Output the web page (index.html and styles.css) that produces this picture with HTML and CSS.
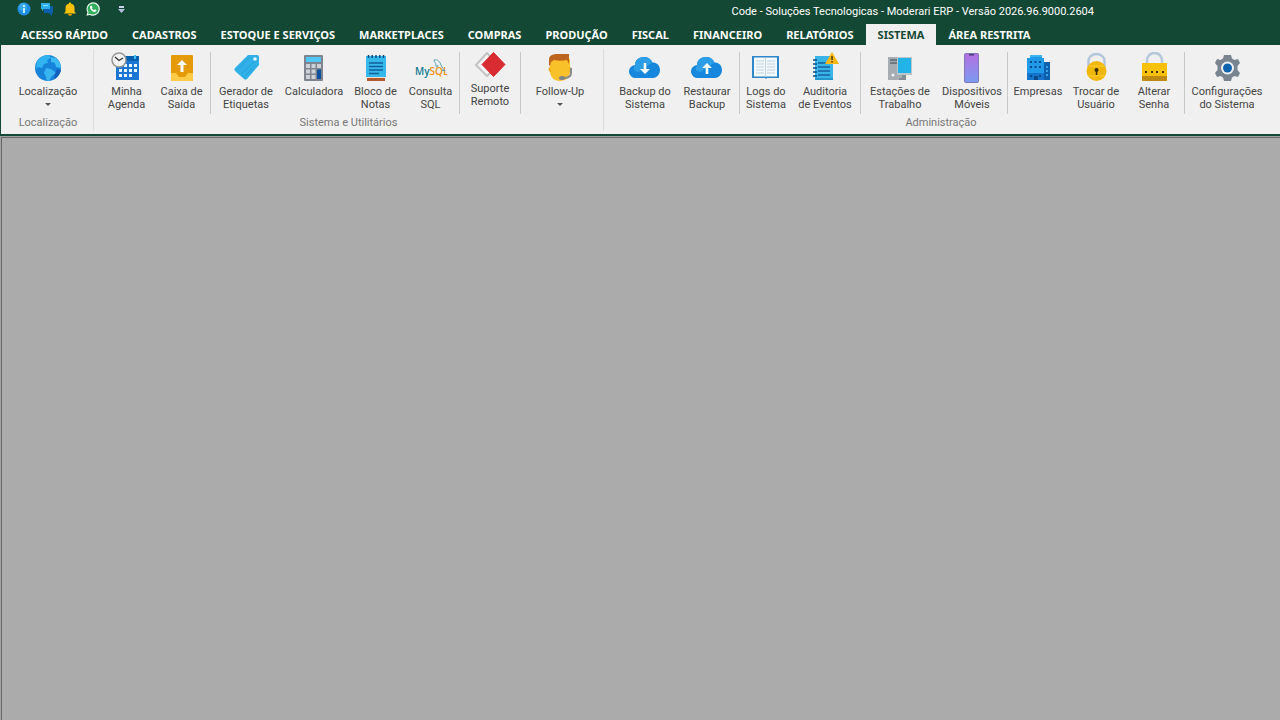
FILE: index.html
```html
<!DOCTYPE html>
<html lang="pt-BR">
<head>
  <meta charset="UTF-8" />
  <title>Moderari ERP</title>
  <link rel="stylesheet" href="styles.css">
</head>
<body>
  <header class="titlebar">
    <div class="quick-access">
      <button class="quick-btn" aria-label="Info">
        <svg width="14" height="14" viewBox="0 0 14 14"><circle cx="7" cy="7" r="6.5" fill="#1b8fe0"/><circle cx="6" cy="5" r="4" fill="#36a9ea"/><rect x="6" y="6" width="2" height="5" fill="#b9ecff"/><rect x="6" y="3" width="2" height="2" fill="#b9ecff"/></svg>
      </button>
      <button class="quick-btn" aria-label="Chat">
        <svg width="14" height="14" viewBox="0 0 14 14"><path d="M4 4h9v7h-1v3l-3-3H4z" fill="#0b5eae"/><path d="M1 1h9v6H4L2 9V7H1z" fill="#2fb0ee"/><path d="M3 3h5v1H3z" fill="#8bdcff"/></svg>
      </button>
      <button class="quick-btn" aria-label="Alertas">
        <svg width="14" height="14" viewBox="0 0 14 14"><path d="M7 0.500c.8 0 1.200.5 1.200 1.200C10.500 2.200 11.500 4 11.500 6v3.500l1.500 2H1l1.500-2V6c0-2 1-3.800 3.300-4.300C5.800 1 6.200.5 7 .5z" fill="#fcc00a"/><path d="M5 12h4c0 1-.8 1.800-2 1.800S5 13 5 12z" fill="#e39b00"/></svg>
      </button>
      <button class="quick-btn" aria-label="WhatsApp">
        <svg width="14" height="14" viewBox="0 0 14 14"><path d="M7 .3a6.700 6.700 0 1 1-3 12.600L.4 13.700l1-3.400A6.700 6.700 0 0 1 7 .3z" fill="#e6f2ea"/><path d="M7 1.500a5.500 5.500 0 1 1-2.800 10.200L2 12.200l.6-2.100A5.500 5.500 0 0 1 7 1.500z" fill="#2fae5b"/><path d="M4.700 3.800l1-.2.8 1.800-.6.8c.5 1 1.100 1.500 2 1.900l.8-.8 1.700.8c0 1.300-.9 1.900-1.900 1.800C6 9.600 4 7.300 4 5.200c0-.6.300-1.100.7-1.400z" fill="#fff"/></svg>
      </button>
      <button class="quick-btn quick-more" aria-label="Personalizar">
        <svg width="7" height="7" viewBox="0 0 7 7"><path d="M1 0h5v2H1z" fill="#c9d5e6"/><path d="M0 3h7L3.500 7z" fill="#b4c3dc"/></svg>
      </button>
    </div>
    <div class="window-title">Code - Soluções Tecnologicas - Moderari ERP - Versão 2026.96.9000.2604</div>
  </header>

  <nav class="tabs">
    <button class="tab">ACESSO RÁPIDO</button>
    <button class="tab">CADASTROS</button>
    <button class="tab">ESTOQUE E SERVIÇOS</button>
    <button class="tab">MARKETPLACES</button>
    <button class="tab">COMPRAS</button>
    <button class="tab">PRODUÇÃO</button>
    <button class="tab">FISCAL</button>
    <button class="tab">FINANCEIRO</button>
    <button class="tab">RELATÓRIOS</button>
    <button class="tab active">SISTEMA</button>
    <button class="tab">ÁREA RESTRITA</button>
  </nav>

  <div class="ribbon">
    <section class="group group-local">
      <div class="items">
        <button class="item w-xl">
          <svg class="icon" viewBox="0 0 32 32">
            <circle cx="16" cy="16" r="13" fill="#1683d8"/>
            <path d="M5 9C8 5 12 3 17 3l2 3-4 2 1 3-4 1-2 4-4-1-2 2z" fill="#31b3f1"/>
            <path d="M19 5l5 1c3 3 5 6 5 10l-5-1-1-4-4-1z" fill="#3cbaf3"/>
            <path d="M14 16l5 1 5 4-4 3-3 5c-2 0-3-1-3-4l-2-4z" fill="#38b5f0"/>
            <path d="M25 17l4 1c-1 4-3 7-7 9l1-5z" fill="#145fbe"/>
          </svg>
          <span>Localização</span>
          <i class="caret"></i>
        </button>
      </div>
      <div class="group-title">Localização</div>
    </section>

    <section class="group group-tools">
      <div class="items">
        <button class="item w-sm">
          <svg class="icon" viewBox="0 0 32 32">
            <path d="M5 4h23v24H5z" fill="#1976d2"/>
            <path d="M5 4h23v5H5z" fill="#0760ad"/>
            <path d="M23 3h2v4h-2z" fill="#38c1f3"/>
            <path d="M13 12h3v3h-3zM18 12h3v3h-3zM23 12h3v3h-3zM8 17h3v3H8zM13 17h3v3h-3zM18 17h3v3h-3zM23 17h3v3h-3zM8 22h3v3H8zM13 22h3v3h-3zM18 22h3v3h-3z" fill="#e9f7ff"/>
            <circle cx="8" cy="8" r="7" fill="#f3f3f3" stroke="#959595" stroke-width="1.500"/>
            <path d="M4 5l4 3.500L12 6" fill="none" stroke="#333" stroke-width="1.300"/>
          </svg>
          <span>Minha<br>Agenda</span>
        </button>
        <button class="item w-sm">
          <svg class="icon" viewBox="0 0 32 32">
            <rect x="5" y="3" width="22" height="26" rx="1" fill="#e59b09"/>
            <path d="M5 21h5l3 4h6l3-4h5v7a1 1 0 0 1-1 1H6a1 1 0 0 1-1-1z" fill="#ffca45"/>
            <path d="M16 8l5 5h-3.500v7h-3v-7H11z" fill="#fff"/>
          </svg>
          <span>Caixa de<br>Saída</span>
        </button>
        <div class="sep"></div>
        <button class="item w-lg">
          <svg class="icon" viewBox="0 0 32 32">
            <path d="M18 3h9a2 2 0 0 1 2 2v8L17 27a2.500 2.500 0 0 1-3 0l-9-8a2.500 2.500 0 0 1 0-3z" fill="#2fb0e8"/>
            <path d="M7 18L20 5M11 22L26 8M14 25l12-12" stroke="#27a0dc" stroke-width="1"/>
            <circle cx="25" cy="7" r="1.800" fill="#e9f7fd"/>
          </svg>
          <span>Gerador de<br>Etiquetas</span>
        </button>
        <button class="item w-lg">
          <svg class="icon" viewBox="0 0 32 32">
            <rect x="6" y="3" width="19" height="26" rx="1" fill="#7e858f"/>
            <rect x="8" y="5" width="15" height="5" fill="#4fc8f5"/>
            <path d="M8 12h4v4H8zM13.500 12h4v4h-4zM19 12h4v4h-4zM8 17.500h4v4H8zM13.500 17.500h4v4h-4zM8 23h4v4H8zM13.500 23h4v4h-4z" fill="#cdd2d8"/>
            <path d="M19 17.500h4V27h-4z" fill="#0e4f9e"/>
          </svg>
          <span>Calculadora</span>
        </button>
        <button class="item w-sm">
          <svg class="icon" viewBox="0 0 32 32">
            <path d="M7 26h18v3H7z" fill="#b25a2b"/>
            <path d="M6 4h20v21H6z" fill="#36b9ea"/>
            <path d="M7 25h18v1H7z" fill="#f5dfce"/>
            <path d="M8.500 3v3M12.200 3v3M16 3v3M19.800 3v3M23.500 3v3" stroke="#0b4a80" stroke-width="1.500"/>
            <path d="M9 11h14M9 14.500h14M9 18h14M9 21.500h10" stroke="#135f99" stroke-width="1.500"/>
          </svg>
          <span>Bloco de<br>Notas</span>
        </button>
        <button class="item w-sm">
          <svg class="icon" viewBox="0 0 32 32">
            <text x="0" y="23" class="mysql"><tspan fill="#127a91">My</tspan><tspan fill="#f29111">SQL</tspan></text>
            <path d="M19 8c4-1 6 2 7 5s3 4 4 6l-3-1 1 1M19 8c0 2 2 3 2 5s0 2 1 2l1-2" fill="none" stroke="#5ba3b2" stroke-width="1"/>
          </svg>
          <span>Consulta<br>SQL</span>
        </button>
        <div class="sep"></div>
        <button class="item w-md">
          <svg class="icon icon-short" viewBox="0 0 32 29">
            <path d="M13 1L2 13l11 11 11-11z" fill="#f4f4f4" stroke="#c3c3c3" stroke-width="2" stroke-linejoin="round"/>
            <path d="M19.500 0.500L31 12.500 19.500 24.500 8 12.500z" fill="#d92b32" stroke="#d92b32" stroke-linejoin="round"/>
          </svg>
          <span>Suporte<br>Remoto</span>
        </button>
        <div class="sep"></div>
        <button class="item w-xl">
          <svg class="icon" viewBox="0 0 32 32">
            <path d="M6 7h20v12c0 6-4 10-10 10S6 25 6 19z" fill="#f9c129"/>
            <path d="M6 15c-2 0-2 5 1 5zM26 15c2 0 2 5-1 5z" fill="#e9ab22"/>
            <path d="M5 13V8c0-4 3-6 8-6h12v10l-2-4c-4 1-9 1-13 0l-3 2-1 4z" fill="#bd641f"/>
            <path d="M27 16v5c0 3-3 5-8 5" fill="none" stroke="#8a8b8c" stroke-width="2"/>
            <ellipse cx="18" cy="26" rx="3" ry="2" fill="#818486"/>
          </svg>
          <span>Follow-Up</span>
          <i class="caret"></i>
        </button>
      </div>
      <div class="group-title">Sistema e Utilitários</div>
    </section>

    <section class="group group-admin">
      <div class="items">
        <button class="item w-ml">
          <svg class="icon" viewBox="0 0 32 32">
            <path d="M7 26a6.500 6.500 0 0 1-1-13c0-5 4-8 9-8 4 0 7 2 8.500 5.500C28 10 31 14 31 18s-3 8-7 8z" fill="#1787dd"/>
            <path d="M6 13c0-5 4-8 9-8 4 0 7 2 8.500 5.500L10 20c-4 0-7-2-4-7z" fill="#2c9de7"/>
            <path d="M14.700 11h2.600v6H21l-5 5-5-5h3.700z" fill="#fff"/>
          </svg>
          <span>Backup do<br>Sistema</span>
        </button>
        <button class="item w-ml">
          <svg class="icon" viewBox="0 0 32 32">
            <path d="M7 26a6.500 6.500 0 0 1-1-13c0-5 4-8 9-8 4 0 7 2 8.500 5.500C28 10 31 14 31 18s-3 8-7 8z" fill="#1787dd"/>
            <path d="M6 13c0-5 4-8 9-8 4 0 7 2 8.500 5.500L10 20c-4 0-7-2-4-7z" fill="#2c9de7"/>
            <path d="M16 11l5 5h-3.700v6h-2.600v-6H11z" fill="#fff"/>
          </svg>
          <span>Restaurar<br>Backup</span>
        </button>
        <div class="sep"></div>
        <button class="item w-xs">
          <svg class="icon" viewBox="0 0 32 32">
            <path d="M2 4h27v22H17l-1 1-1-1H2z" fill="#2d87c8"/>
            <path d="M4 5.500h23v19H4z" fill="#f3f8fb"/>
            <path d="M15.500 6v19M6 9h8M6 12h8M6 15h8M6 18h8M6 21h8M17 9h8M17 12h8M17 15h8M17 18h8M17 21h8" stroke="#c2d2de"/>
          </svg>
          <span>Logs do<br>Sistema</span>
        </button>
        <button class="item w-lg">
          <svg class="icon" viewBox="0 0 32 32">
            <path d="M6 4h18v24H6z" fill="#38b4e8"/>
            <path d="M6 26h18v2H6z" fill="#2396cc"/>
            <path d="M9 11h12M9 15h12M9 19h12M9 23h12" stroke="#14609d" stroke-width="1.500"/>
            <path d="M4 8h4M4 12h4M4 16h4M4 20h4M4 24h4" stroke="#0b4b83" stroke-width="1.500"/>
            <path d="M23 0l7 12H16z" fill="#fbb812"/>
            <path d="M22.300 4h1.500v4h-1.500zM22.300 9h1.500v1.500h-1.500z" fill="#4d3b0b"/>
          </svg>
          <span>Auditoria<br>de Eventos</span>
        </button>
        <div class="sep"></div>
        <button class="item w-xl">
          <svg class="icon" viewBox="0 0 32 32">
            <path d="M4 5h14v23H4z" fill="#a5adb3"/>
            <path d="M6 8h7M6 11h7" stroke="#60686e" stroke-width="1.500"/>
            <circle cx="9" cy="23" r="1.500" fill="#f0f3f5"/>
            <path d="M13 5h15v18H13z" fill="#bdc5ca"/>
            <path d="M14 6h13v15H14z" fill="#22b4e6"/>
            <path d="M18 23h4v3h-4zM15 26h7v2h-7z" fill="#858d94"/>
          </svg>
          <span>Estações de<br>Trabalho</span>
        </button>
        <button class="item w-lg">
          <svg class="icon" viewBox="0 0 32 32">
            <defs><linearGradient id="phone" x1="0" y1="0" x2="0" y2="1"><stop offset="0" stop-color="#b46fe2"/><stop offset="1" stop-color="#7b9af0"/></linearGradient></defs>
            <rect x="8" y="1" width="15" height="30" rx="2" fill="#8177b7"/>
            <rect x="9" y="2" width="13" height="28" rx="1" fill="url(#phone)"/>
            <path d="M13 2h5v1.500h-5z" fill="#483c75"/>
          </svg>
          <span>Dispositivos<br>Móveis</span>
        </button>
        <div class="sep"></div>
        <button class="item w-md">
          <svg class="icon" viewBox="0 0 32 32">
            <path d="M22 10h6v18h-6z" fill="#0d60ad"/>
            <path d="M8 3h12v3h2v15H5V6h3z" fill="#1e9ae8"/>
            <path d="M8 3h12v2H8z" fill="#38b5f2"/>
            <path d="M5 21h17v7H5z" fill="#1475cc"/>
            <path d="M8 9h2v2H8zM12.500 9h2v2h-2zM17 9h2v2h-2zM8 14h2v2H8zM12.500 14h2v2h-2zM17 14h2v2h-2zM8 23h2v2H8zM12 24h4v4h-4zM17 23h2v2h-2z" fill="#074a8b"/>
            <path d="M24 14h2v2h-2zM24 18h2v2h-2zM24 22h2v2h-2z" fill="#39a2e6"/>
          </svg>
          <span>Empresas</span>
        </button>
        <button class="item w-md">
          <svg class="icon" viewBox="0 0 32 32">
            <path d="M8.500 15V9a8 7 0 0 1 16 0v6" fill="none" stroke="#b5c7db" stroke-width="2.500"/>
            <circle cx="16.500" cy="19" r="10" fill="#f2b70b"/>
            <path d="M9 14h15M8 24h17" stroke="#ffd033" stroke-width="1"/>
            <circle cx="16.500" cy="18" r="2" fill="#3a2d05"/>
            <path d="M15.800 19h1.500v4h-1.500z" fill="#3a2d05"/>
          </svg>
          <span>Trocar de<br>Usuário</span>
        </button>
        <button class="item w-md">
          <svg class="icon" viewBox="0 0 32 32">
            <path d="M9 13V8a7.500 7 0 0 1 15 0v5" fill="none" stroke="#b5c7db" stroke-width="2.500"/>
            <path d="M4 11h25v17a1 1 0 0 1-1 1H5a1 1 0 0 1-1-1z" fill="#f8c007"/>
            <path d="M4 24h25v4a1 1 0 0 1-1 1H5a1 1 0 0 1-1-1z" fill="#c08a12"/>
            <path d="M7 19h2v2H7zM13 19h2v2h-2zM18 19h2v2h-2zM24 19h2v2h-2z" fill="#44350a"/>
          </svg>
          <span>Alterar<br>Senha</span>
        </button>
        <div class="sep"></div>
        <button class="item w-xxl">
          <svg class="icon" viewBox="0 0 32 32">
            <path d="M13 3h7l1 3.500 2.500 1.500L27 7l2 4-2.500 3v4l2.500 3-2 4-3.500-1-2.500 1.500-1 3.500h-7l-1-3.500L9.500 24 6 25l-2-4 2.500-3v-4L4 11l2-4 3.500 1L12 6.500z" fill="#7a8490"/>
            <circle cx="16.500" cy="16" r="6.500" fill="#eef2f5"/>
            <circle cx="16.500" cy="16" r="4.500" fill="#1063ad"/>
          </svg>
          <span>Configurações<br>do Sistema</span>
        </button>
      </div>
      <div class="group-title">Administração</div>
    </section>
  </div>

  <main class="workspace"></main>
</body>
</html>
```
FILE: styles.css
```css
* {
  box-sizing: border-box;
}

body {
  margin: 0;
  height: 100vh;
  display: flex;
  flex-direction: column;
  overflow: hidden;
  background-color: #134834;
  font-family: Roboto, Tahoma, sans-serif;
  font-size: 11px;
}

button {
  margin: 0;
  padding: 0;
  border: none;
  background: transparent;
  font: inherit;
  color: inherit;
  cursor: pointer;
}

/* TITLE BAR */
.titlebar {
  display: flex;
  justify-content: space-between;
  height: 24px;
  padding: 2px 186px 0 17px;
  color: #fff;
}

.quick-access {
  display: flex;
  gap: 9px;
  height: 14px;
  align-items: center;
}

.quick-btn {
  display: flex;
}

.quick-more {
  margin-left: 9px;
}

.window-title {
  line-height: 20px;
  white-space: nowrap;
}

/* TABS */
.tabs {
  display: flex;
  height: 21px;
  padding-left: 9px;
}

.tab {
  padding: 0 12px;
  color: #fff;
  font-family: "Noto Sans", sans-serif;
  font-weight: bold;
  line-height: 20px;
  white-space: nowrap;
}

.tab.active {
  background: #f0f0f0;
  color: #134834;
}

/* RIBBON */
.ribbon {
  display: flex;
  height: 91px;
  padding-top: 4px;
  background: #f0f0f0;
  border-left: 1px solid #134834;
  border-bottom: 2px solid #134834;
}

.group {
  height: 82px;
  padding: 0 5px;
  border-right: 1px solid #dcdcdc;
  color: #444;
}

.group-local {
  padding: 0 7px 0 9px;
}

.group-admin {
  padding-left: 10px;
  border-right: none;
}

.items {
  display: flex;
  height: 67px;
  padding-top: 3px;
}

.item {
  display: flex;
  flex-direction: column;
  align-items: center;
  line-height: 13px;
  white-space: nowrap;
}

.w-xs {
  width: 50px;
}

.w-sm {
  width: 55px;
}

.w-md {
  width: 58px;
}

.w-ml {
  width: 62px;
}

.w-lg {
  width: 68px;
}

.w-xl {
  width: 76px;
}

.w-xxl {
  width: 82px;
}

.icon {
  width: 32px;
  height: 32px;
  margin-bottom: 1px;
}

.icon-short {
  height: 29px;
}

.mysql {
  font-family: "Open Sans", sans-serif;
  font-size: 10px;
  font-weight: 600;
}

.caret {
  margin-top: 5px;
  border: 3px solid transparent;
  border-top-color: #555;
  border-bottom: none;
}

.sep {
  width: 1px;
  height: 62px;
  margin: 0 1px;
  background: #c9c9c9;
}

.group-title {
  color: #777;
  line-height: 14px;
  text-align: center;
}

/* MDI AREA */
.workspace {
  flex: 1;
  background: #ababab;
  border-top: 1px solid #a0a0a0;
  border-left: 1px solid #a0a0a0;
  box-shadow: inset 1px 1px #696969;
}
```
